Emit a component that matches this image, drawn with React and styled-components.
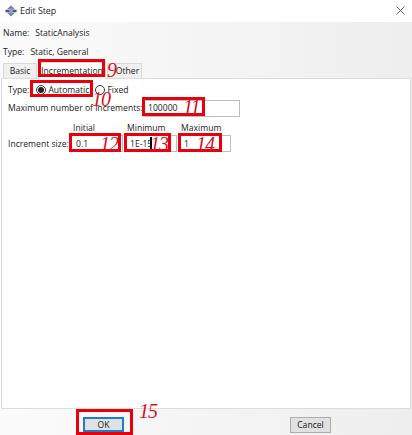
import React from "react";
import styled, { createGlobalStyle } from "styled-components";

const GlobalStyle = createGlobalStyle`
  html, body {
    margin: 0;
    padding: 0;
    background: #fff;
  }
  * {
    box-sizing: border-box;
  }
`;

const callouts = [
  { x: 38, y: 59, w: 67, h: 18 },
  { x: 30, y: 80, w: 63, h: 17 },
  { x: 142, y: 97, w: 63, h: 19 },
  { x: 69, y: 133, w: 52, h: 19 },
  { x: 124, y: 133, w: 47, h: 19 },
  { x: 178, y: 133, w: 44, h: 19 },
  { x: 76, y: 409, w: 57, h: 26 },
];

const numbers = [
  { n: "9", x: 107, y: 59 },
  { n: "10", x: 92, y: 88 },
  { n: "11", x: 183, y: 96 },
  { n: "12", x: 100, y: 133 },
  { n: "13", x: 150, y: 133 },
  { n: "14", x: 196, y: 133 },
  { n: "15", x: 139, y: 400 },
];

function App() {
  return (
    <>
      <GlobalStyle />
      <Dialog>
        <TitleBar>
          <AppIcon viewBox="0 0 14 14">
            <path d="M7 0.5 L11.5 5 L2.5 5 Z" fill="#6f76ab" />
            <path d="M7 13.5 L11.5 9 L2.5 9 Z" fill="#6f76ab" />
            <rect x="0.5" y="5.5" width="13" height="3" fill="#4f5790" />
            <rect x="5" y="4" width="4" height="6" fill="#9aa0c8" />
          </AppIcon>
          <Title>Edit Step</Title>
          <CloseIcon viewBox="0 0 9 9">
            <path d="M0.5 0.5 L8.5 8.5 M8.5 0.5 L0.5 8.5" stroke="#555" strokeWidth="0.9" fill="none" />
          </CloseIcon>
        </TitleBar>
        <Body>
          <InfoRow>
            <span>Name:</span>
            <span>StaticAnalysis</span>
          </InfoRow>
          <InfoRow>
            <span>Type:</span>
            <span>Static, General</span>
          </InfoRow>
          <Tabs>
            <Tab $w={34}>Basic</Tab>
            <Tab $w={68} $active>Incrementation</Tab>
            <Tab $w={35} $shift={6}>Other</Tab>
          </Tabs>
          <Panel>
            <TypeRow>
              <Label>Type:</Label>
              <RadioOption $gap={7}>
                <Radio $checked />
                Automatic
              </RadioOption>
              <RadioOption $gap={6}>
                <Radio />
                Fixed
              </RadioOption>
            </TypeRow>
            <MaxRow>
              <Label>Maximum number of increments:</Label>
              <Field>100000</Field>
            </MaxRow>
            <SizeGrid>
              <span />
              <ColumnHead>Initial</ColumnHead>
              <ColumnHead>Minimum</ColumnHead>
              <ColumnHead>Maximum</ColumnHead>
              <Label>Increment size:</Label>
              <Field>0.1</Field>
              <Field>
                1E-15<Caret />
              </Field>
              <Field>1</Field>
            </SizeGrid>
          </Panel>
          <Footer>
            <Button $primary>OK</Button>
            <Button>Cancel</Button>
          </Footer>
        </Body>
        {callouts.map((c) => (
          <Callout key={c.x + "-" + c.y} $x={c.x} $y={c.y} $w={c.w} $h={c.h} />
        ))}
        {numbers.map((c) => (
          <Number key={c.n} $x={c.x} $y={c.y}>
            {c.n}
          </Number>
        ))}
      </Dialog>
    </>
  );
}

const Dialog = styled.div`
  position: relative;
  width: 412px;
  height: 435px;
  overflow: hidden;
  font-family: "Open Sans", "Noto Sans", sans-serif;
  font-size: 8.6px;
  color: #1a1a1a;
  display: flex;
  flex-direction: column;
`;
const TitleBar = styled.div`
  height: 22px;
  background: #fff;
  display: flex;
  align-items: center;
  padding: 0 7px 1px 5px;
`;
const AppIcon = styled.svg`
  width: 12px;
  height: 12px;
`;
const Title = styled.div`
  margin-left: 3px;
  font-size: 8.8px;
`;
const CloseIcon = styled.svg`
  width: 9px;
  height: 9px;
  margin-left: auto;
`;
const Body = styled.div`
  flex: 1;
  display: flex;
  flex-direction: column;
  background: linear-gradient(to right, #fbfbfb, #eeeeee);
  padding-top: 1px;
`;
const InfoRow = styled.div`
  height: 19px;
  display: flex;
  align-items: center;
  gap: 6px;
  padding-left: 3px;
`;
const Tabs = styled.div`
  display: flex;
  align-items: flex-end;
  height: 15px;
  margin-top: 2px;
  padding-left: 3px;
  gap: 1px;
`;
const Tab = styled.div`
  width: ${(p) => p.$w}px;
  height: ${(p) => (p.$active ? "17px" : "15px")};
  padding-left: ${(p) => p.$shift || 0}px;
  background: ${(p) => (p.$active ? "#fff" : "#f0f0f0")};
  border: 1px solid #d9d9d9;
  border-bottom: none;
  display: flex;
  align-items: center;
  justify-content: center;
  margin-bottom: ${(p) => (p.$active ? "-1px" : "0")};
  position: relative;
`;
const Panel = styled.div`
  height: 331px;
  margin: 0 1px;
  background: #fff;
  border: 1px solid #dcdcdc;
  padding: 2px 6px;
`;
const Label = styled.span`
  white-space: nowrap;
`;
const TypeRow = styled.div`
  height: 17px;
  display: flex;
  align-items: center;
`;
const RadioOption = styled.span`
  display: flex;
  align-items: center;
  gap: 2px;
  margin-left: ${(p) => p.$gap}px;
`;
const Radio = styled.span`
  width: 10px;
  height: 10px;
  border-radius: 50%;
  border: 1px solid #333;
  background: #fff;
  display: inline-flex;
  align-items: center;
  justify-content: center;
  &::after {
    content: "";
    width: 6px;
    height: 6px;
    border-radius: 50%;
    background: ${(p) => (p.$checked ? "#222" : "transparent")};
  }
`;
const MaxRow = styled.div`
  display: grid;
  grid-template-columns: 135px 97px;
  align-items: center;
  margin-top: 1px;
  height: 18px;
`;
const Field = styled.div`
  height: 17px;
  border: 1px solid #bdbdbd;
  background: #fff;
  padding: 0 4px;
  display: flex;
  align-items: center;
`;
const Caret = styled.span`
  width: 3px;
  height: 13px;
  margin-left: -2px;
  border-left: 2px solid #000;
`;
const SizeGrid = styled.div`
  display: grid;
  grid-template-columns: 61px 52px 52px 52px;
  column-gap: 2px;
  align-items: center;
  margin-top: 3px;
`;
const ColumnHead = styled.div`
  height: 15px;
  padding-left: 2px;
  display: flex;
  align-items: center;
`;
const Footer = styled.div`
  flex: 1;
  display: flex;
  justify-content: space-between;
  align-items: flex-start;
  padding: 8px 81px 0 83px;
`;
const Button = styled.div`
  width: 41px;
  height: ${(p) => (p.$primary ? "15px" : "16px")};
  background: #e1e1e1;
  border: ${(p) => (p.$primary ? "2px solid #1a7fd0" : "1px solid #adadad")};
  display: flex;
  align-items: center;
  justify-content: center;
`;
const Callout = styled.div`
  position: absolute;
  left: ${(p) => p.$x}px;
  top: ${(p) => p.$y}px;
  width: ${(p) => p.$w}px;
  height: ${(p) => p.$h}px;
  border: 3px solid #e8000d;
  pointer-events: none;
`;
const Number = styled.div`
  position: absolute;
  left: ${(p) => p.$x}px;
  top: ${(p) => p.$y}px;
  font-family: "Liberation Serif", serif;
  font-style: italic;
  font-size: 20px;
  letter-spacing: -1px;
  line-height: 22px;
  color: #d8101c;
  pointer-events: none;
`;

export default App;
